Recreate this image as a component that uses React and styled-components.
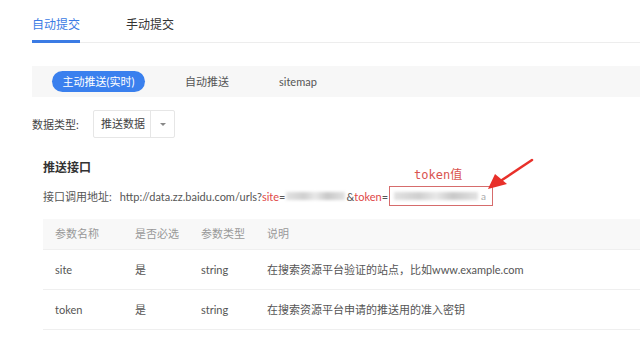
import React from "react";
import styled, { createGlobalStyle } from "styled-components";

const Global = createGlobalStyle`
  html, body { margin: 0; padding: 0; background: #fff; }
  body {
    width: 640px; height: 352px; overflow: hidden;
    font-family: "Lato", "Noto Sans CJK SC", sans-serif;
    color: #555;
  }
`;

const Page = styled.div`
  padding-left: 32px;
`;

const Tabs = styled.div`
  display: flex;
  height: 42px;
  border-bottom: 1px solid #ededed;
`;

const Tab = styled.div`
  font-size: 12px;
  line-height: 13px;
  padding-top: 18px;
  margin-right: 46px;
  color: ${(p) => (p.$active ? "#3b7be4" : "#333")};
  border-bottom: 3px solid ${(p) => (p.$active ? "#3b7be4" : "transparent")};
  box-sizing: border-box;
  height: 43px;
`;

const SubBar = styled.div`
  margin-top: 23px;
  height: 31px;
  background: #f7f7f7;
  display: flex;
  align-items: center;
  padding-left: 20px;
  gap: 30px;
`;

const SubItem = styled.div`
  font-size: 11px;
  height: 21px;
  line-height: 21px;
  padding: 0 10px;
  border-radius: 11px;
  color: ${(p) => (p.$active ? "#fff" : "#555")};
  background: ${(p) => (p.$active ? "#3a80ee" : "transparent")};
  min-width: ${(p) => (p.$active ? "73px" : "auto")};
  text-align: center;
`;

const FormRow = styled.div`
  margin-top: 13px;
  display: flex;
  align-items: center;
  height: 28px;
`;

const Label = styled.div`
  font-size: 11px;
  color: #444;
  width: 61px;
`;

const Select = styled.div`
  display: flex;
  height: 28px;
  width: 82px;
  box-sizing: border-box;
  border: 1px solid #e6e6e6;
  border-radius: 2px;
`;

const SelectValue = styled.div`
  flex: 0 0 57px;
  font-size: 11px;
  line-height: 26px;
  padding-left: 7px;
  box-sizing: border-box;
  color: #444;
  border-right: 1px solid #e6e6e6;
`;

const SelectArrow = styled.div`
  flex: 1;
  display: flex;
  align-items: center;
  justify-content: center;
  &::after {
    content: "";
    border-left: 3px solid transparent;
    border-right: 3px solid transparent;
    border-top: 3px solid #888;
  }
`;

const Section = styled.div`
  padding-left: 11px;
`;

const Title = styled.div`
  margin-top: 22px;
  font-size: 12px;
  font-weight: bold;
  color: #333;
  line-height: 16px;
`;

const UrlLine = styled.div`
  margin-top: 10px;
  height: 20px;
  display: flex;
  align-items: center;
  font-size: 11px;
  color: #555;
  white-space: nowrap;
`;

const UrlLabel = styled.span`
  margin-right: 8px;
`;

const Red = styled.span`
  color: #e04848;
`;

const Blur = styled.span`
  display: inline-block;
  width: ${(p) => p.$w}px;
  height: 8px;
  background: linear-gradient(90deg, #e2e2e2, #cfcfcf 30%, #e8e8e8 50%, #c8c8c8 70%, #e2e2e2);
  filter: blur(1.5px);
  margin: 0 1px;
`;

const TokenBox = styled.span`
  position: relative;
  display: inline-flex;
  align-items: center;
  height: 20px;
  box-sizing: border-box;
  width: 104px;
  border: 1px solid #d66c6c;
  padding-left: 3px;
  margin-left: 1px;
  gap: 2px;
`;

const TokenTail = styled.span`
  color: #aaa;
  font-size: 10px;
`;

const TokenNote = styled.span`
  position: absolute;
  left: 24px;
  top: -22px;
  font-family: "DejaVu Sans Mono", "Liberation Mono", "Noto Sans CJK SC", monospace;
  font-size: 12px;
  color: #d9534f;
`;

const Arrow = styled.svg`
  position: absolute;
  left: 96px;
  top: -32px;
`;

const Table = styled.div`
  margin-top: 13px;
  display: grid;
  grid-template-columns: 80px 66px 66px 1fr;
  font-size: 11px;
`;

const HeadCell = styled.div`
  background: #f8f8f8;
  height: 30px;
  line-height: 30px;
  padding-left: 12px;
  color: #999;
  border-bottom: 1px solid #efefef;
`;

const Cell = styled.div`
  height: 39px;
  line-height: 39px;
  padding-left: 12px;
  color: #555;
  border-bottom: 1px solid #efefef;
  white-space: nowrap;
`;

const rows = [
  ["site", "是", "string", "在搜索资源平台验证的站点，比如www.example.com"],
  ["token", "是", "string", "在搜索资源平台申请的推送用的准入密钥"],
];

export default function App() {
  return (
    <>
      <Global />
      <Page>
        <Tabs>
          <Tab $active>自动提交</Tab>
          <Tab>手动提交</Tab>
        </Tabs>
        <SubBar>
          <SubItem $active>主动推送(实时)</SubItem>
          <SubItem>自动推送</SubItem>
          <SubItem>sitemap</SubItem>
        </SubBar>
        <FormRow>
          <Label>数据类型:</Label>
          <Select>
            <SelectValue>推送数据</SelectValue>
            <SelectArrow />
          </Select>
        </FormRow>
        <Section>
          <Title>推送接口</Title>
          <UrlLine>
            <UrlLabel>接口调用地址:</UrlLabel>
            <span>http://data.zz.baidu.com/urls?</span>
            <Red>site</Red>
            <span>=</span>
            <Blur $w={59} />
            <span>&amp;</span>
            <Red>token</Red>
            <span>=</span>
            <TokenBox>
              <TokenNote>token值</TokenNote>
              <Blur $w={84} />
              <TokenTail>a</TokenTail>
              <Arrow width="50" height="40" viewBox="0 0 50 40">
                <path d="M46 5 L16 25" stroke="#e8302a" strokeWidth="2.5" strokeLinecap="round" />
                <path d="M2 34 L9 19 L21 29 Z" fill="#e8302a" />
              </Arrow>
            </TokenBox>
          </UrlLine>
          <Table>
            <HeadCell>参数名称</HeadCell>
            <HeadCell>是否必选</HeadCell>
            <HeadCell>参数类型</HeadCell>
            <HeadCell>说明</HeadCell>
            {rows.map((r) => r.map((c, i) => <Cell key={r[0] + i}>{c}</Cell>))}
          </Table>
        </Section>
      </Page>
    </>
  );
}
